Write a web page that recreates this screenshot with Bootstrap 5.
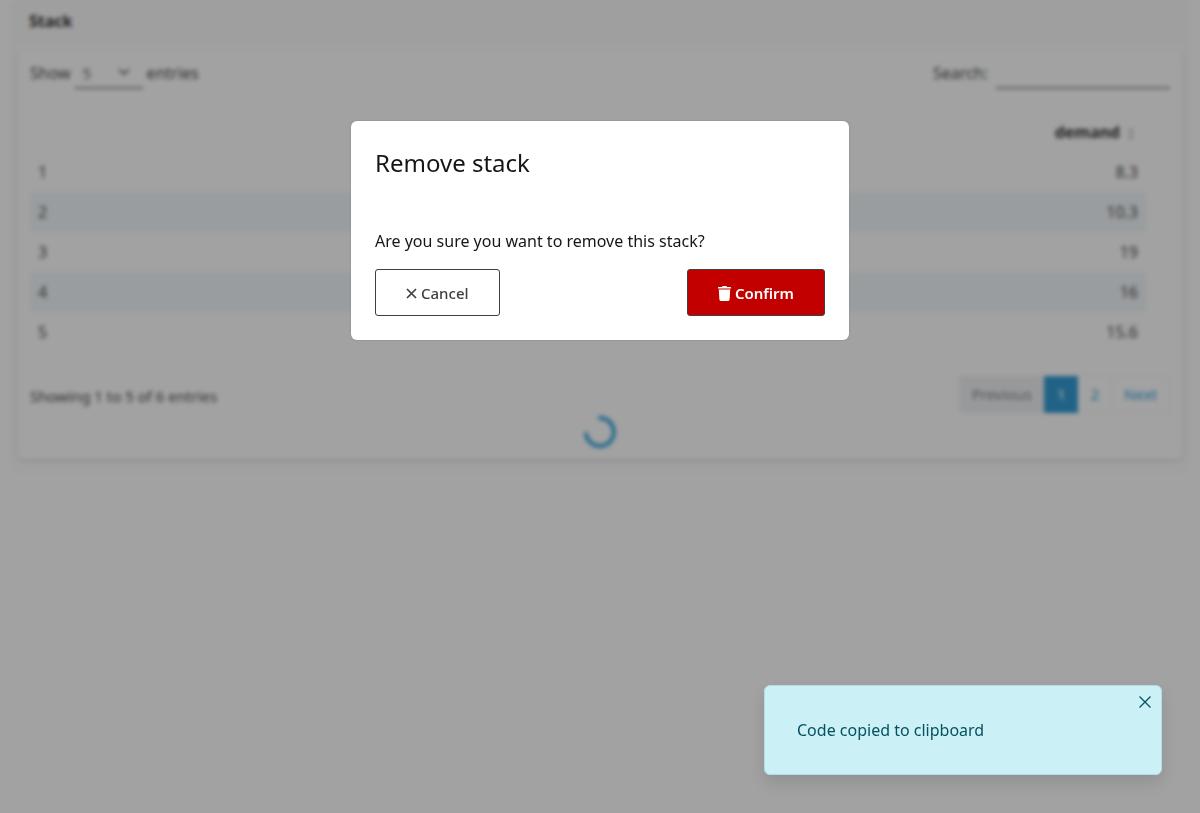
<!DOCTYPE html>
<html lang="en">
<head>
<meta charset="utf-8">
<meta name="viewport" content="width=device-width, initial-scale=1">
<title>Stack</title>
<link href="https://cdn.jsdelivr.net/npm/bootstrap@5.3.0/dist/css/bootstrap.min.css" rel="stylesheet">
<style>
  body { font-family: "Noto Sans", sans-serif; font-size: 16px; color: #484848; min-height: 100vh; overflow: hidden; }
  .page-wrap { padding: 0 12px; }
  .outer-card { border: 2px solid #f5f5f5; border-top-width: 1px; border-radius: 6px; }
  .outer-card > .card-header { background: #fbfbfb; border-color: #f0f0f0; color: #222; padding: 8px 15px; }
  .inner-card { margin: 5px 3px 9px; padding: 9px 12px 10px; border: 1px solid #f3f3f3; border-radius: 6px; box-shadow: 0 2px 4px rgba(0,0,0,.14); }
  .line-field { border: 0; border-bottom: 2px solid #909090; border-radius: 0; background-color: transparent; color: #666; }
  .length-select { width: 68px; height: 32px; padding: 2px 8px 0; font-size: 15px; background-position: right 13px center; background-size: 12px 12px; }
  .search-input { width: 174px; height: 32px; padding: 0 4px; }
  .stack-table { width: calc(100% - 24px); margin-top: 23px; --bs-table-color: #484848; }
  .stack-table th, .stack-table td { border: 0; padding: 8px; }
  .stack-table th { color: #2c2c2c; }
  .stack-table tbody tr:nth-child(even) > * { background: #f1f7fb; }
  .sort-mark { margin: 0 4px 0 8px; }
  .info-text { font-size: 15px; padding-top: 4px; }
  .pagination { --bs-pagination-color: #2d9fdc; --bs-pagination-font-size: 15px; --bs-pagination-border-color: #f5f5f5; --bs-pagination-active-bg: #2996d2; --bs-pagination-active-border-color: #2996d2; --bs-pagination-disabled-bg: #eff1f3; --bs-pagination-disabled-color: #808488; --bs-pagination-disabled-border-color: #eff1f3; --bs-pagination-border-radius: 0; --bs-pagination-padding-y: 6px; }
  .spinner-row { padding-top: 2px; }
  .scrim { background: rgba(22,22,22,.4); backdrop-filter: blur(2px); z-index: 1040; }
  .confirm-modal .modal-dialog { max-width: 498px; margin: 121px auto; }
  .confirm-modal .modal-content { border: 0; border-radius: 6px; padding: 24px; color: #161616; box-shadow: 0 0 2px rgba(0,0,0,.2); }
  .confirm-modal h2 { font-size: 24px; line-height: 36px; margin-bottom: 48px; }
  .confirm-modal p { line-height: 24px; margin-bottom: 16px; color: #161616; }
  .btn-box { height: 47px; padding: 2px 30px 0; border: 1px solid #404040; border-radius: 3px; font-size: 15px; font-weight: 500; color: #404040; background: #fff; display: flex; align-items: center; gap: 4px; }
  .btn-remove, .btn-remove:hover { background: #c20000; color: #fff; font-weight: 600; }
  .copy-toast { right: 38px; bottom: 38px; width: 398px; z-index: 1060; padding: 32px; background: #cbf0f6; border: 1px solid #b3dde4; border-radius: 6px; color: #055160; box-shadow: 0 8px 16px rgba(0,0,0,.1); }
  .copy-toast p { line-height: 24px; }
  .toast-close { top: 10px; right: 10px; color: #055160; line-height: 0; }
</style>
</head>
<body>
<main class="page-wrap">
  <section class="card outer-card">
    <header class="card-header fw-bold">Stack</header>
    <div class="inner-card">
      <div class="d-flex justify-content-between align-items-start">
        <label class="d-flex align-items-center gap-1">Show
          <select class="form-select line-field length-select"><option>5</option><option>10</option></select>
          entries</label>
        <label class="d-flex align-items-center gap-2">Search: <input type="search" class="form-control line-field search-input"></label>
      </div>
      <table class="table stack-table mb-4">
        <thead><tr><th></th><th class="text-end">demand<svg class="sort-mark" width="6" height="14" viewBox="0 0 6 14" fill="#ccc"><path d="M3 0l3 6H0zM3 14l3-6H0z"/></svg></th></tr></thead>
        <tbody>
          <tr><td>1</td><td class="text-end">8.3</td></tr>
          <tr><td>2</td><td class="text-end">10.3</td></tr>
          <tr><td>3</td><td class="text-end">19</td></tr>
          <tr><td>4</td><td class="text-end">16</td></tr>
          <tr><td>5</td><td class="text-end">15.6</td></tr>
        </tbody>
      </table>
      <div class="d-flex justify-content-between align-items-center">
        <div class="info-text">Showing 1 to 5 of 6 entries</div>
        <ul class="pagination mb-0">
          <li class="page-item disabled"><a class="page-link" href="#">Previous</a></li>
          <li class="page-item active"><a class="page-link" href="#">1</a></li>
          <li class="page-item"><a class="page-link" href="#">2</a></li>
          <li class="page-item"><a class="page-link" href="#">Next</a></li>
        </ul>
      </div>
      <div class="text-center lh-1 spinner-row">
        <svg width="34" height="34" viewBox="0 0 34 34" fill="none" stroke="#2d9fdc" stroke-width="4" stroke-linecap="round"><path d="M17 3a14 14 0 1 1-14 16"/></svg>
      </div>
    </div>
  </section>
</main>

<div class="scrim position-fixed top-0 start-0 w-100 h-100"></div>

<div class="modal confirm-modal d-block" role="dialog" aria-modal="true" aria-labelledby="confirm-title">
  <div class="modal-dialog">
    <div class="modal-content">
      <h2 id="confirm-title" class="fw-normal">Remove stack</h2>
      <p>Are you sure you want to remove this stack?</p>
      <div class="d-flex justify-content-between">
        <button type="button" class="btn btn-box"><svg width="11" height="11" viewBox="0 0 11 11" stroke="currentColor" stroke-width="1.700"><path d="M1 1l9 9M10 1l-9 9"/></svg>Cancel</button>
        <button type="button" class="btn btn-box btn-remove"><svg width="13" height="15" viewBox="0 0 13 15" fill="currentColor"><path d="M4 1l.5-1h4L9 1h3.500q.5 0 .5.5V2.500H0V1.500Q0 1 .5 1zM.8 3.500h11.400L11.600 13.600Q11.500 15 10.200 15H2.800Q1.500 15 1.400 13.600z"/></svg>Confirm</button>
      </div>
    </div>
  </div>
</div>

<div class="copy-toast position-fixed" role="status">
  <p class="mb-0">Code copied to clipboard</p>
  <button type="button" class="toast-close position-absolute border-0 bg-transparent p-0" aria-label="Close"><svg width="12" height="12" viewBox="0 0 12 12" stroke="currentColor" stroke-width="1.300"><path d="M.5.5l11 11M11.500.5l-11 11"/></svg></button>
</div>
<script src="https://cdn.jsdelivr.net/npm/bootstrap@5.3.0/dist/js/bootstrap.bundle.min.js"></script>
</body>
</html>
